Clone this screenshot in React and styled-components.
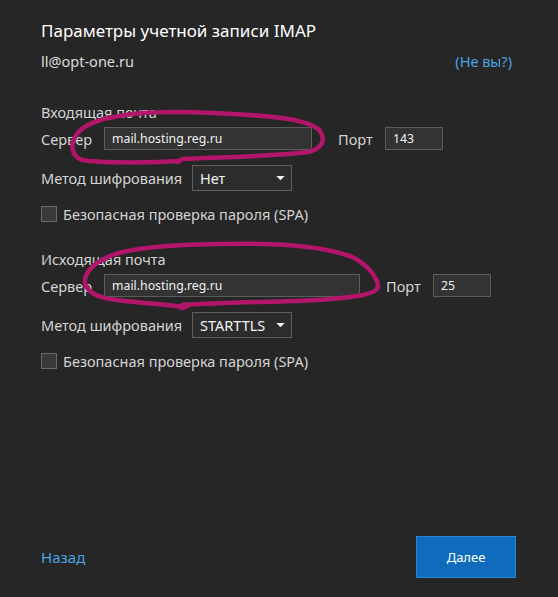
import React from 'react';
import styled, { createGlobalStyle } from 'styled-components';

const GlobalStyle = createGlobalStyle`
  html, body {
    margin:0;
    padding:0;
    background:#262626;
  }
  body {
    font-family:"Segoe UI", "Noto Sans", "Open Sans", sans-serif;
    color:#d8d8d8;
  }
`;

const ServerField = ({ value, width, port, portGap }) => (
  <FieldRow>
    <Label width={63}>Сервер</Label>
    <TextBox width={width}>{value}</TextBox>
    <Label gapLeft={portGap} width={47}>Порт</Label>
    <TextBox width={58}>{port}</TextBox>
  </FieldRow>
);

const EncryptionField = ({ value }) => (
  <FieldRow>
    <Label width={151}>Метод шифрования</Label>
    <Select>
      <span>{value}</span>
      <Caret viewBox='0 0 10 6'>
        <path d='M0 0 L10 0 L5 5 Z' fill='#f2f2f2' />
      </Caret>
    </Select>
  </FieldRow>
);

const SpaField = () => (
  <CheckRow>
    <CheckBox />
    <CheckLabel>Безопасная проверка пароля (SPA)</CheckLabel>
  </CheckRow>
);

export default function App() {
  return (
    <>
      <GlobalStyle />
      <Page>
        <Title>Параметры учетной записи IMAP</Title>
        <AccountRow>
          <span>ll@opt-one.ru</span>
          <Link>(Не вы?)</Link>
        </AccountRow>

        <Section>
          <Heading>Входящая почта</Heading>
          <ServerField value='mail.hosting.reg.ru' width={208} port='143' portGap={26} />
          <EncryptionField value='Нет' />
          <SpaField />
        </Section>

        <Section second>
          <Heading>Исходящая почта</Heading>
          <ServerField value='mail.hosting.reg.ru' width={256} port='25' portGap={26} />
          <EncryptionField value='STARTTLS' />
          <SpaField />
        </Section>

        <Footer>
          <Link big>Назад</Link>
          <PrimaryButton>Далее</PrimaryButton>
        </Footer>

        {/* hand-drawn marker circles over the server fields */}
        <Scribble viewBox='0 0 558 597'>
          <path d='M110 118 C 140 110, 200 111, 262 116 C 290 118, 312 122, 320 131 C 326 140, 322 149, 308 152 C 280 156, 230 157, 182 159 C 178 162, 176 163, 180 161 C 150 163, 100 163, 82 160 C 72 156, 70 146, 75 137 C 80 128, 90 122, 112 117'
            fill='none' stroke='#b3156a' strokeWidth='4.5' strokeLinecap='round' />
          <path d='M103 260 C 115 250, 160 245, 217 244 C 260 243, 310 243, 350 256 C 368 264, 378 278, 378 287 C 376 294, 360 297, 317 300 C 280 302, 230 302, 182 305 C 179 308, 181 309, 185 307 C 160 304, 130 302, 117 300 C 98 298, 87 292, 85 283 C 84 275, 90 266, 104 259'
            fill='none' stroke='#b3156a' strokeWidth='4.5' strokeLinecap='round' />
        </Scribble>
      </Page>
    </>
  );
}

const Page = styled.div`
  position:relative;
  box-sizing:border-box;
  height:597px;
  padding:19px 46px 19px 41px;
  display:flex;
  flex-direction:column;
`;
const Title = styled.div`
  font-size:17px;
  line-height:24px;
  color:#ffffff;
`;
const AccountRow = styled.div`
  margin-top:8px;
  display:flex;
  justify-content:space-between;
  font-size:14.5px;
  line-height:20px;
  color:#dcdcdc;
`;
const Link = styled.span`
  color:#4ba3e3;
  font-size:${({ big }) => (big ? '15px' : '14.5px')};
`;
const Section = styled.div`
  margin-top:${({ second }) => (second ? '27px' : '31px')};
  display:flex;
  flex-direction:column;
  gap:15px;
`;
const Heading = styled.div`
  font-size:14.5px;
  line-height:20px;
  color:#d4d4d4;
  margin-bottom:-10px;
`;
const FieldRow = styled.div`
  display:flex;
  align-items:center;
`;
const Label = styled.span`
  flex:none;
  box-sizing:border-box;
  width:${({ width }) => width}px;
  margin-left:${({ gapLeft }) => gapLeft || 0}px;
  font-size:14.5px;
  color:#d4d4d4;
`;
const TextBox = styled.div`
  box-sizing:border-box;
  width:${({ width }) => width}px;
  height:23px;
  padding:0 7px;
  display:flex;
  align-items:center;
  background:#333333;
  border:1px solid #5c5c5c;
  font-size:12.3px;
  color:#f0f0f0;
`;
const Select = styled.div`
  box-sizing:border-box;
  width:100px;
  height:26px;
  padding:0 6px 0 7px;
  display:flex;
  align-items:center;
  justify-content:space-between;
  background:#2c2c2c;
  border:1px solid #5f5f5f;
  font-size:14.5px;
  color:#f2f2f2;
`;
const Caret = styled.svg`
  width:9px;
  height:5px;
`;
const CheckRow = styled.label`
  display:flex;
  align-items:center;
  gap:6px;
  height:16px;
`;
const CheckBox = styled.span`
  box-sizing:border-box;
  width:16px;
  height:16px;
  background:#3a3a3a;
  border:1px solid #6a6a6a;
`;
const CheckLabel = styled.span`
  font-size:14.5px;
  color:#d4d4d4;
`;
const Footer = styled.div`
  margin-top:auto;
  margin-right:-4px;
  display:flex;
  align-items:center;
  justify-content:space-between;
`;
const PrimaryButton = styled.button`
  box-sizing:border-box;
  width:100px;
  height:42px;
  background:#0f6cbd;
  border:1px solid #2a86d6;
  color:#ffffff;
  font-family:inherit;
  font-size:13px;
`;
const Scribble = styled.svg`
  position:absolute;
  inset:0;
  width:558px;
  height:597px;
  pointer-events:none;
`;
